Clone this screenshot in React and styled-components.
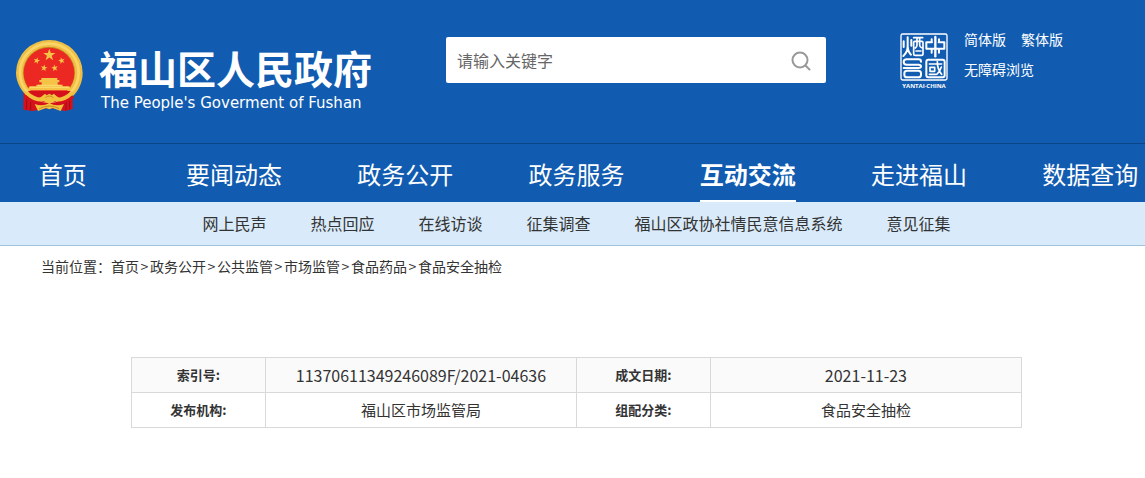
// App.jsx
import React from 'react';
import styled, { createGlobalStyle } from 'styled-components';

const GlobalStyle = createGlobalStyle`
    body {
        margin: 0;
        background: #fff;
        color: #333;
        font-family: "Noto Sans CJK SC", sans-serif;
    }

    a {
        color: inherit;
        text-decoration: none;
    }
`;

const Header = styled.header`
    background: #115cb0;
    color: #fff;
    overflow: hidden;
`;

const TopBar = styled.div`
    display: flex;
    align-items: flex-start;
    gap: 74px;
    min-height: 106px;
    padding: 37px 15px 0;
    border-bottom: 1px solid #0c4587;
`;

const Brand = styled.a`
    display: flex;
    flex-shrink: 0;
    gap: 15px;
    padding-top: 2px;
`;

const BrandText = styled.div`
    padding-top: 6px;
`;

const Title = styled.h1`
    margin: 0 0 4px;
    font-size: 39px;
    font-weight: 700;
    line-height: 44px;
    white-space: nowrap;
`;

const Subtitle = styled.p`
    margin: 0;
    padding-left: 2px;
    font-family: "DejaVu Sans", sans-serif;
    font-size: 15px;
    line-height: 20px;
    white-space: nowrap;
`;

const SearchForm = styled.form`
    display: flex;
    flex: 0 1 380px;
    box-sizing: border-box;
    height: 46px;
    background: #fff;
    border-radius: 2px;
`;

const SearchInput = styled.input`
    flex: 1;
    min-width: 0;
    padding: 0 11px;
    border: none;
    background: none;
    color: #333;
    font-family: inherit;
    font-size: 16px;
    outline: none;

    &::placeholder {
        color: #666;
        opacity: 1;
    }
`;

const SearchButton = styled.button`
    display: flex;
    align-items: center;
    justify-content: center;
    width: 50px;
    padding: 2px 0 0;
    border: none;
    background: none;
    color: #999;
    cursor: pointer;
`;

const Tools = styled.div`
    display: flex;
    flex-shrink: 0;
    gap: 16px;
`;

const Seal = styled.div`
    display: flex;
    flex-direction: column;
    align-items: center;
    width: 48px;
    margin-top: -4px;
    font-family: "Open Sans", sans-serif;
    font-size: 6px;
    font-weight: 700;
    line-height: 10px;
    white-space: nowrap;
`;

const ToolLinks = styled.div`
    display: grid;
    grid-template-columns: auto auto;
    align-content: start;
    gap: 10px 15px;
    margin-top: -8px;
    font-size: 14px;
    line-height: 20px;
`;

const WideLink = styled.a`
    grid-column: 1 / -1;
`;

const MainNav = styled.nav`
    display: grid;
    grid-template-columns: repeat(7, 1fr);
    margin: 0 -31px 0 -23px;
`;

const MainNavItem = styled.a`
    justify-self: center;
    height: 56px;
    border-bottom: 2px solid ${({ $active }) => ($active ? '#fff' : 'transparent')};
    font-size: 24px;
    font-weight: ${({ $active }) => ($active ? 700 : 400)};
    line-height: 60px;
    white-space: nowrap;
`;

const SubNav = styled.nav`
    display: flex;
    justify-content: center;
    gap: 44px;
    padding-left: 8px;
    background: #d9eafa;
    border-bottom: 1px solid #9fc3dd;
    font-size: 16px;
    line-height: 43px;
    white-space: nowrap;
`;

const Breadcrumb = styled.nav`
    padding: 10px 41px 12px;
    font-size: 14px;
    line-height: 20px;
`;

const Separator = styled.span`
    display: inline-block;
    width: 11px;
    text-align: center;
`;

const InfoSection = styled.main`
    padding: 69px 123px 50px 131px;
`;

const InfoTable = styled.table`
    width: 100%;
    border-collapse: collapse;
    table-layout: fixed;
    text-align: center;
`;

const InfoRow = styled.tr`
    height: 35px;

    &:first-child {
        background: #fafafa;
    }
`;

const InfoLabel = styled.th`
    width: 15%;
    padding: 0;
    border: 1px solid #d9d9d9;
    font-size: 13px;
    line-height: 20px;
`;

const InfoValue = styled.td`
    width: 35%;
    padding: 0;
    border: 1px solid #d9d9d9;
    font-size: ${({ $numeric }) => ($numeric ? 16 : 15)}px;
    line-height: 20px;
`;

const mainLinks = ['首页', '要闻动态', '政务公开', '政务服务', '互动交流', '走进福山', '数据查询'];
const subLinks = ['网上民声', '热点回应', '在线访谈', '征集调查', '福山区政协社情民意信息系统', '意见征集'];
const crumbs = ['首页', '政务公开', '公共监管', '市场监管', '食品药品', '食品安全抽检'];

const star = 'M0-10 2.4-3.1 9.5-3.1 3.8 1.2 5.9 8.1 0 4-5.9 8.1-3.8 1.2-9.5-3.1-2.4-3.1Z';

const Emblem = () => (
    <svg width="69" height="73" viewBox="17 12 207 219" aria-hidden="true">
        <path d="M43 160 42 224 70 228 120 218 168 228 190 222 190 160Z" fill="#d5121c" />
        <path d="M52 178V224M64 186V226M170 186V226M181 178V223" stroke="#9c0f17" strokeWidth="3" />
        <path
            d="M20 113a100 98 0 1 1 200 0c0 30-13 55-32 73l-20-12-18 24-28-8-28 8-18-22-20 10c-19-18-36-43-36-73Z"
            fill="#efbf45"
        />
        <ellipse cx="120" cy="113" rx="88" ry="87" fill="none" stroke="#f9d568" strokeWidth="8" />
        <circle cx="119" cy="113" r="78" fill="#c98a22" />
        <circle cx="119" cy="114" r="76" fill="#eb2922" />
        <g fill="#f5c447">
            <path d={star} transform="translate(120 60) scale(1.9)" />
            <path d={star} transform="translate(82 77) scale(1.05) rotate(15)" />
            <path d={star} transform="translate(157 77) scale(1.05) rotate(-15)" />
            <path d={star} transform="translate(104 99) scale(1.05) rotate(10)" />
            <path d={star} transform="translate(136 99) scale(1.05) rotate(-10)" />
            <path d="M96 129h48v6h6v7h-5v7h15v5h20l7 12H54l7-12h20v-5h16v-7h-7v-7h6Z" />
        </g>
        <path d="M62 157h116M86 151h68" stroke="#fbdc72" strokeWidth="3" />
        <path d="M56 168h128l-18 20-28 12h-38l-28-12Z" fill="#d5121c" />
        <path
            d="M47 168c14 4 25 16 38 19 10 2 14-6 22-11l5 5 8-5 8 5 5-5c8 5 12 13 22 11 13-3 24-15 38-19-4 18-19 30-38 33l-17-3-18 8-18-8-17 3c-19-3-34-15-38-33Z"
            fill="#f2c23f"
        />
        <path d="M108 188q12-10 24 0" fill="none" stroke="#c98a22" strokeWidth="3" />
        <path d="M48 184q22 20 48 21M192 184q-22 20-48 21" fill="none" stroke="#d5121c" strokeWidth="9" />
        <path d="M76 207q24 9 44-3 20 12 44 3l-10 21-24-9-10 4-10-4-24 9Z" fill="#f2c23f" />
        <path d="M90 221q30-16 60 0" fill="none" stroke="#c98a22" strokeWidth="3" />
    </svg>
);

const SealMark = () => (
    <svg width="48" height="48" viewBox="0 0 144 144" fill="none" stroke="#fff" strokeWidth="6" strokeLinecap="round" strokeLinejoin="round" aria-hidden="true">
        <rect x="3" y="3" width="138" height="138" rx="5" strokeWidth="4" />
        <path d="M23 13v26q0 18-13 30M23 39q1 18 10 26M11 25v17M34 21v17" />
        <path d="M41 14h27M44 25h22q3 0 3 4v33q0 5-5 5H46q-5 0-5-5V29q0-4 3-4ZM51 15v21q0 6-5 9M59 15v21q0 6 6 8M48 54h15" strokeWidth="5" />
        <path d="M106 12v58" strokeWidth="7" />
        <path d="M79 28v19h54V28M79 28h17M116 28h17M95 19v9M117 19v9M95 47v12M117 47v12" />
        <path d="M39 79H20q-9 0-9 8t9 8h36q7 0 7 5t-7 5H11M42 79h14q7 0 7 7" />
        <rect x="13" y="113" width="50" height="20" rx="8" />
        <rect x="79" y="80" width="55" height="53" rx="6" />
        <path d="M88 93h37M90 103h14v12H90ZM88 124h19M112 86q0 23 13 38M124 102q-4 14-14 22" strokeWidth="5" />
    </svg>
);

const SearchIcon = () => (
    <svg width="20" height="20" viewBox="0 0 20 20" fill="none" stroke="currentColor" strokeWidth="2" strokeLinecap="round" aria-hidden="true">
        <circle cx="9" cy="9" r="7.5" />
        <path d="m14.5 14.5 4 4" />
    </svg>
);

const App = () => {
    const handleSearch = (e) => {
        e.preventDefault();
    };

    return (
        <>
            <GlobalStyle />
            <Header>
                <TopBar>
                    <Brand href="#">
                        <Emblem />
                        <BrandText>
                            <Title>福山区人民政府</Title>
                            <Subtitle>The People's Goverment of Fushan</Subtitle>
                        </BrandText>
                    </Brand>
                    <SearchForm onSubmit={handleSearch}>
                        <SearchInput type="text" placeholder="请输入关键字" aria-label="请输入关键字" />
                        <SearchButton type="submit" aria-label="搜索">
                            <SearchIcon />
                        </SearchButton>
                    </SearchForm>
                    <Tools>
                        <Seal>
                            <SealMark />
                            YANTAI·CHINA
                        </Seal>
                        <ToolLinks>
                            <a href="#">简体版</a>
                            <a href="#">繁体版</a>
                            <WideLink href="#">无障碍浏览</WideLink>
                        </ToolLinks>
                    </Tools>
                </TopBar>
                <MainNav>
                    {mainLinks.map((name) => (
                        <MainNavItem key={name} href="#" $active={name === '互动交流'}>{name}</MainNavItem>
                    ))}
                </MainNav>
            </Header>
            <SubNav>
                {subLinks.map((name) => (
                    <a key={name} href="#">{name}</a>
                ))}
            </SubNav>
            <Breadcrumb>
                当前位置：
                {crumbs.map((name, i) => (
                    <React.Fragment key={name}>
                        {i > 0 && <Separator>&gt;</Separator>}
                        <a href="#">{name}</a>
                    </React.Fragment>
                ))}
            </Breadcrumb>
            <InfoSection>
                <InfoTable>
                    <tbody>
                        <InfoRow>
                            <InfoLabel scope="row">索引号:</InfoLabel>
                            <InfoValue $numeric>11370611349246089F/2021-04636</InfoValue>
                            <InfoLabel scope="row">成文日期:</InfoLabel>
                            <InfoValue $numeric>2021-11-23</InfoValue>
                        </InfoRow>
                        <InfoRow>
                            <InfoLabel scope="row">发布机构:</InfoLabel>
                            <InfoValue>福山区市场监管局</InfoValue>
                            <InfoLabel scope="row">组配分类:</InfoLabel>
                            <InfoValue>食品安全抽检</InfoValue>
                        </InfoRow>
                    </tbody>
                </InfoTable>
            </InfoSection>
        </>
    );
};

export default App;
